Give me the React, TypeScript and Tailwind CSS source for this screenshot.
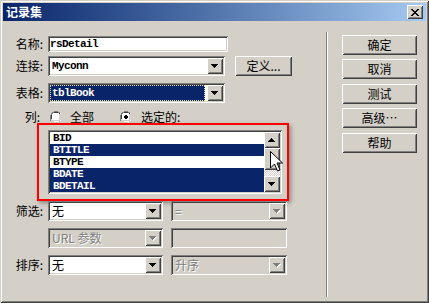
import type { ReactNode } from 'react'

const SUNKEN =
  'shadow-[inset_1px_1px_0_#808080,inset_-1px_-1px_0_#ffffff,inset_2px_2px_0_#404040,inset_-2px_-2px_0_#d4d0c8]'
const RAISED =
  'shadow-[inset_1px_1px_0_#ffffff,inset_-1px_-1px_0_#404040,inset_2px_2px_0_#d4d0c8,inset_-2px_-2px_0_#808080]'
const MONO = "[font-family:'Liberation_Mono',monospace] text-[11px] font-bold tracking-[-0.6px]"
const DIS = 'text-[#808080] [text-shadow:1px_1px_0_#ffffff]'

function Tri({ up = false, disabled = false }: { up?: boolean; disabled?: boolean }) {
  const d = up
    ? 'M3 0h1v1h1v1h1v1h1v1h-7v-1h1v-1h1v-1h1z'
    : 'M0 0h7v1h-1v1h-1v1h-1v1h-1v-1h-1v-1h-1v-1h-1z'
  return (
    <svg width="8" height="5" viewBox="0 0 8 5" shapeRendering="crispEdges">
      {disabled && <path d={d} fill="#ffffff" transform="translate(1 1)" />}
      <path d={d} fill={disabled ? '#808080' : '#000000'} />
    </svg>
  )
}

function DropBtn({ disabled = false }: { disabled?: boolean }) {
  return (
    <div className={`flex h-[16px] w-[16px] shrink-0 items-center justify-center bg-[#d4d0c8] ${RAISED}`}>
      <Tri disabled={disabled} />
    </div>
  )
}

function Select({
  w,
  children,
  disabled = false,
  highlight = false,
}: {
  w: string
  children?: ReactNode
  disabled?: boolean
  highlight?: boolean
}) {
  return (
    <div className={`flex h-[20px] ${w} p-[2px] ${disabled ? 'bg-[#d4d0c8]' : 'bg-white'} ${SUNKEN}`}>
      {highlight ? (
        <div className="mr-[2px] flex flex-1 items-center border border-dotted border-[#e8e0a0] bg-[#0a246a] pl-[1px] text-white">
          {children}
        </div>
      ) : (
        <div className={`flex flex-1 items-center pl-[2px] ${disabled ? DIS : ''}`}>{children}</div>
      )}
      <DropBtn disabled={disabled} />
    </div>
  )
}

function Label({ children, pr = 'pr-[5px]' }: { children?: ReactNode; pr?: string }) {
  return <div className={`w-[45px] shrink-0 text-right ${pr}`}>{children}</div>
}

function Radio({ checked = false }: { checked?: boolean }) {
  return (
    <svg width="12" height="12" viewBox="0 0 12 12" shapeRendering="crispEdges">
      <path d="M4 0h4v1h2v1h-6v1h-1v1h-1v4h-1v2h-1v-6h1v-2h1v-1h2z" fill="#808080" />
      <path d="M4 1h4v1h2v1h-6v1h-1v1h-1v3h-1v-4h1v-1h1v-1h1z" fill="#404040" />
      <path d="M10 2h1v2h1v4h-1v2h-2v1h-5v-1h6v-1h1v-1h1v-4h-1z" fill="#ffffff" />
      <path d="M2 3h8v6h-1v1h-6v-1h-1z" fill="#ffffff" />
      <path d="M3 2h6v1h1v6h-1v1h-6v-1h-1v-6h1z" fill="#ffffff" />
      <path d="M9 3h1v6h-1v1h-6v-1h6z" fill="#d4d0c8" />
      {checked && <path d="M5 4h2v1h1v2h-1v1h-2v-1h-1v-2h1z" fill="#000000" />}
    </svg>
  )
}

const COLS = [
  { name: 'BID', sel: false },
  { name: 'BTITLE', sel: true },
  { name: 'BTYPE', sel: false },
  { name: 'BDATE', sel: true },
  { name: 'BDETAIL', sel: true },
]

const BUTTONS = [
  { label: '确定', mt: 'mt-0' },
  { label: '取消', mt: 'mt-[4px]' },
  { label: '测试', mt: 'mt-[5px]' },
  { label: '高级…', mt: 'mt-[4px]' },
  { label: '帮助', mt: 'mt-[5px]' },
]

export default function App() {
  return (
    <div className="relative h-[303px] w-[429px] select-none bg-[#d4d0c8] p-[3px] [font-family:'Noto_Sans_CJK_SC',sans-serif] text-[12px] leading-none text-black shadow-[inset_1px_1px_0_#d4d0c8,inset_-1px_-1px_0_#404040,inset_2px_2px_0_#ffffff,inset_-2px_-2px_0_#808080]">
      {/* title bar */}
      <div className="flex h-[18px] items-center bg-linear-to-r from-[#0a246a] to-[#a6caf0] pl-[3px] pr-[3px]">
        <span className="font-bold text-white">记录集</span>
        <div className={`ml-auto flex h-[14px] w-[16px] items-center justify-center bg-[#d4d0c8] ${RAISED}`}>
          <svg width="8" height="7" viewBox="0 0 8 7" shapeRendering="crispEdges">
            <path
              d="M0 0h2v1h1v1h2v-1h1v-1h2v1h-1v1h-1v1h-1v1h1v1h1v1h1v1h-2v-1h-1v-1h-2v1h-1v1h-2v-1h1v-1h1v-1h1v-1h-1v-1h-1v-1h-1z"
              fill="#000000"
            />
          </svg>
        </div>
      </div>

      <div className="flex h-[279px]">
        {/* left side */}
        <div className="flex w-[323px] flex-col">
          <div className="mt-[15px] flex h-[16px] items-center">
            <Label>名称:</Label>
            <div className={`flex h-[16px] w-[180px] items-center bg-white pl-[2px] ${SUNKEN}`}>
              <span className={MONO}>rsDetail</span>
            </div>
          </div>

          <div className="mt-[4px] flex h-[20px] items-center">
            <Label>连接:</Label>
            <Select w="w-[177px]">
              <span className={MONO}>Myconn</span>
            </Select>
            <div className={`ml-[10px] flex h-[20px] w-[57px] items-center justify-center bg-[#d4d0c8] ${RAISED}`}>
              定义...
            </div>
          </div>

          <div className="mt-[7px] flex h-[20px] items-center">
            <Label>表格:</Label>
            <Select w="w-[177px]" highlight>
              <span className={MONO}>tblBook</span>
            </Select>
          </div>

          <div className="mt-[8px] flex h-[12px] items-center">
            <Label pr="pr-[8px]">列:</Label>
            <div className="ml-[2px] flex items-center">
              <Radio />
              <span className="ml-[8px]">全部</span>
              <div className="ml-[26px] flex">
                <Radio checked />
              </div>
              <span className="ml-[9px]">选定的:</span>
            </div>
          </div>

          {/* annotated list */}
          <div className="ml-[34px] h-[78px] w-[252px] border-2 border-[#ff0000] pl-[9px] pt-[5px] shadow-[2px_2px_4px_rgba(0,0,0,0.35)]">
            <div className={`flex h-[64px] w-[234px] bg-white p-[2px] ${SUNKEN}`}>
              <div className="flex flex-1 flex-col">
                {COLS.map(c => (
                  <div
                    key={c.name}
                    className={`flex h-[12px] items-center pl-[3px] ${MONO} ${c.sel ? 'bg-[#0a246a] text-white' : 'text-black'}`}
                  >
                    {c.name}
                  </div>
                ))}
              </div>
              <div className="flex w-[16px] flex-col">
                <div className={`flex h-[16px] items-center justify-center bg-[#d4d0c8] ${RAISED}`}>
                  <Tri up />
                </div>
                <div className={`h-[22px] bg-[#d4d0c8] ${RAISED}`} />
                <div className="h-[6px] bg-[repeating-conic-gradient(#d4d0c8_0%_25%,#ffffff_0%_50%)] bg-[length:2px_2px]" />
                <div className={`flex h-[16px] items-center justify-center bg-[#d4d0c8] ${RAISED}`}>
                  <Tri />
                </div>
              </div>
            </div>
          </div>

          <div className="flex h-[20px] items-center">
            <Label>筛选:</Label>
            <Select w="w-[115px]">无</Select>
            <div className="ml-[8px]">
              <Select w="w-[116px]" disabled>
                =
              </Select>
            </div>
          </div>

          <div className="mt-[7px] flex h-[20px] items-center">
            <Label />
            <Select w="w-[115px]" disabled>
              URL 参数
            </Select>
            <div className={`ml-[8px] h-[20px] w-[116px] bg-[#d4d0c8] ${SUNKEN}`} />
          </div>

          <div className="mt-[7px] flex h-[20px] items-center">
            <Label>排序:</Label>
            <Select w="w-[115px]">无</Select>
            <div className="ml-[8px]">
              <Select w="w-[116px]" disabled>
                升序
              </Select>
            </div>
          </div>
        </div>

        {/* divider */}
        <div className="mt-[11px] h-[265px] w-[2px] border-l border-r border-l-[#808080] border-r-white" />

        {/* buttons */}
        <div className="flex flex-col pl-[14px] pt-[14px]">
          {BUTTONS.map(b => (
            <div
              key={b.label}
              className={`${b.mt} flex h-[20px] w-[75px] items-center justify-center bg-[#d4d0c8] ${RAISED}`}
            >
              {b.label}
            </div>
          ))}
        </div>
      </div>

      {/* mouse pointer */}
      <svg className="absolute left-[270px] top-[151px]" width="13" height="21" viewBox="0 0 13 21">
        <path d="M0.5 0.5V17L4.5 13L7.5 20L10 19L7 12H12.5Z" fill="#ffffff" stroke="#000000" strokeWidth="1" />
      </svg>
    </div>
  )
}
